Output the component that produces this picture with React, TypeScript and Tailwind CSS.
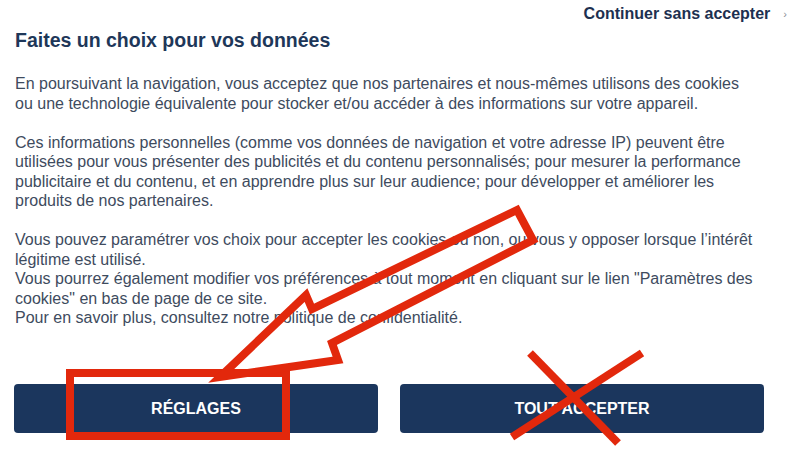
import React from "react";

const para1 = [
  "En poursuivant la navigation, vous acceptez que nos partenaires et nous-mêmes utilisons des cookies",
  "ou une technologie équivalente pour stocker et/ou accéder à des informations sur votre appareil.",
];
const para2 = [
  "Ces informations personnelles (comme vos données de navigation et votre adresse IP) peuvent être",
  "utilisées pour vous présenter des publicités et du contenu personnalisés; pour mesurer la performance",
  "publicitaire et du contenu, et en apprendre plus sur leur audience; pour développer et améliorer les",
  "produits de nos partenaires.",
];
const para3 = [
  "Vous pouvez paramétrer vos choix pour accepter les cookies ou non, ou vous y opposer lorsque l’intérêt",
  "légitime est utilisé.",
  "Vous pourrez également modifier vos préférences à tout moment en cliquant sur le lien \"Paramètres des",
  "cookies\" en bas de page de ce site.",
  "Pour en savoir plus, consultez notre politique de confidentialité.",
];

function Para({ lines, className = "" }: { lines: string[]; className?: string }) {
  return (
    <div className={className}>
      {lines.map((l, i) => (
        <div key={i} className="whitespace-nowrap">
          {l}
        </div>
      ))}
    </div>
  );
}

export default function App() {
  return (
    <div
      className="relative w-[799px] h-[449px] overflow-hidden bg-white flex flex-col"
      style={{ fontFamily: '"Liberation Sans", Arial, sans-serif' }}
    >
      <div className="flex justify-end items-center pt-[5px] pr-[12px] h-[23px]">
        <span className="text-[16px] leading-[18px] font-bold text-[#1d3050]">Continuer sans accepter</span>
        <span className="ml-[13px] text-[11px] leading-[18px] text-[#8a8f96]">›</span>
      </div>

      <h1 className="mt-[5px] px-[15px] text-[19.5px] leading-[24px] font-bold text-[#1e3759]">
        Faites un choix pour vos données
      </h1>

      <div className="mt-[22px] px-[15px] text-[16px] leading-[19.5px] text-[#3e4b5e]">
        <Para lines={para1} />
        <Para lines={para2} className="mt-[19.5px]" />
        <Para lines={para3} className="mt-[19.5px]" />
      </div>

      <div className="mt-auto pb-[16px] pl-[14px] flex gap-[22px]">
        <button className="w-[364px] h-[49px] rounded-[4px] bg-[#1b365d] text-white text-[16px] font-bold">
          RÉGLAGES
        </button>
        <button className="w-[364px] h-[49px] rounded-[4px] bg-[#1b365d] text-white text-[16px] font-bold">
          TOUT ACCEPTER
        </button>
      </div>

      <svg
        className="absolute inset-0 pointer-events-none"
        width="799"
        height="449"
        viewBox="0 0 799 449"
      >
        <g fill="none" stroke="#e2280c" strokeWidth="8" strokeLinejoin="miter" strokeMiterlimit="10">
          <rect x="70" y="373" width="216" height="63" />
          <polygon points="220,377 306,295 312,309 517,210 533,240 332,343 338,360" />
          <line x1="530" y1="353" x2="618" y2="443" />
          <line x1="642" y1="353" x2="512" y2="437" />
        </g>
      </svg>
    </div>
  );
}
